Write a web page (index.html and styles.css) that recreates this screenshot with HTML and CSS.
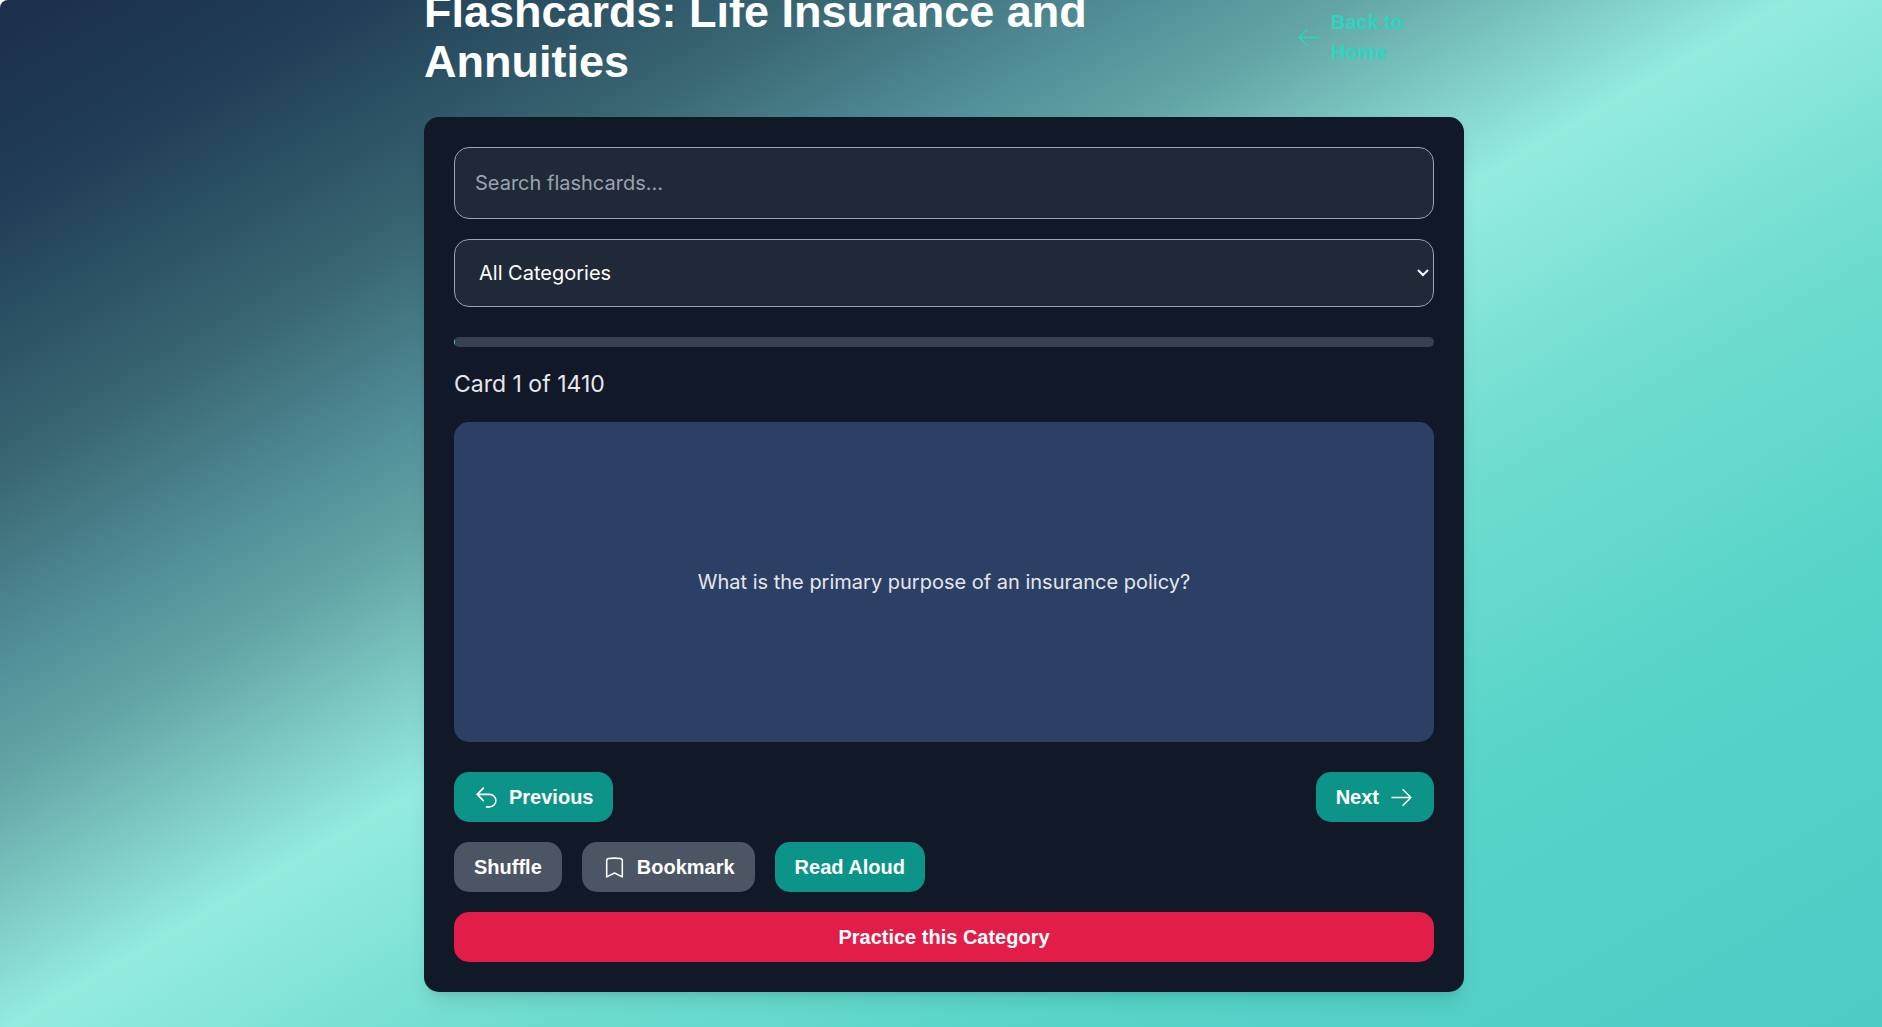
FILE: index.html
```html
<!DOCTYPE html>
<html lang="en">
<head>
<meta charset="utf-8">
<meta name="viewport" content="width=device-width, initial-scale=1">
<title>Flashcards: Life Insurance and Annuities</title>
<link rel="stylesheet" href="styles.css">
</head>
<body>
<div class="shell">
<div class="page">
  <main class="container">
    <header class="header">
      <h1 class="title">Flashcards: Life Insurance and Annuities</h1>
      <a class="back" href="#">
        <svg class="icon" viewBox="0 0 24 24" aria-hidden="true"><path d="M10.5 19.5 3 12m0 0 7.500-7.500M3 12h18"/></svg>
        <span>Back to Home</span>
      </a>
    </header>
    <section class="panel">
      <div class="filters">
        <input class="field search" type="text" placeholder="Search flashcards..." aria-label="Search flashcards">
        <div class="select">
          <select class="field category" aria-label="Category">
            <option>All Categories</option>
          </select>
          <svg class="chevron" viewBox="0 0 12 8" aria-hidden="true"><path d="M1.500 1.500 6 6l4.500-4.500"/></svg>
        </div>
      </div>
      <div class="progress"><div class="progress-bar" style="width: 0.07%"></div></div>
      <p class="count">Card 1 of 1410</p>
      <div class="flashcard"><p class="question">What is the primary purpose of an insurance policy?</p></div>
      <div class="actions">
        <div class="row spread">
          <button class="btn teal" type="button">
            <svg class="icon" viewBox="0 0 24 24" aria-hidden="true"><path d="M9 15 3 9m0 0 6-6M3 9h12a6 6 0 0 1 0 12h-3"/></svg>
            Previous
          </button>
          <button class="btn teal" type="button">
            Next
            <svg class="icon" viewBox="0 0 24 24" aria-hidden="true"><path d="M13.500 4.500 21 12m0 0-7.500 7.500M21 12H3"/></svg>
          </button>
        </div>
        <div class="row">
          <button class="btn gray" type="button">Shuffle</button>
          <button class="btn gray" type="button">
            <svg class="icon" viewBox="0 0 24 24" aria-hidden="true"><path d="M17.593 3.322c1.100.128 1.907 1.077 1.907 2.185V21L12 17.250 4.500 21V5.507c0-1.108.806-2.057 1.907-2.185a48.507 48.507 0 0 1 11.186 0Z"/></svg>
            Bookmark
          </button>
          <button class="btn teal" type="button">Read Aloud</button>
        </div>
        <button class="btn rose" type="button">Practice this Category</button>
      </div>
    </section>
  </main>
</div>
</div>
</body>
</html>
```
FILE: styles.css
```css
*, *::before, *::after {
  box-sizing: border-box;
}

body {
  margin: 0;
  background: #fff;
}

h1, p {
  margin: 0;
}

.shell {
  height: 100vh;
  overflow: auto;
  scrollbar-width: none;
  border-top-left-radius: 8px;
}

.page {
  margin-top: -53px;
  padding: 40px 40px 40px 46px;
  font-family: Inter, sans-serif;
  font-size: 20px;
  line-height: 30px;
  color: #fff;
  background: linear-gradient(to bottom right, #1a2a48, #213e56 12%, #386672 24%, #538f99 33%, #62a3a5 38%, #94ebde 50%, #72ddd2 62%, #57d4c8 78%, #4dccc4);
}

.container {
  max-width: 1040px;
  margin: 0 auto;
}

.header {
  display: flex;
  justify-content: space-between;
  align-items: center;
  margin-bottom: 30px;
}

.title {
  max-width: 780px;
  font: bold 45px/50px "Liberation Sans", Arial, sans-serif;
}

.back {
  display: flex;
  align-items: center;
  gap: 10px;
  width: 168px;
  padding-right: 40px;
  font: bold 20px/30px "Liberation Sans", Arial, sans-serif;
  color: #2dd4bf;
  text-decoration: none;
}

.icon {
  flex: none;
  width: 25px;
  height: 25px;
  fill: none;
  stroke: currentColor;
  stroke-width: 1.5;
  stroke-linecap: round;
  stroke-linejoin: round;
}

.panel {
  padding: 30px;
  border-radius: 15px;
  background: #111827;
  box-shadow: 0 12px 18px -4px rgb(0 0 0 / 10%), 0 5px 8px -5px rgb(0 0 0 / 10%);
}

.filters {
  display: flex;
  flex-direction: column;
  gap: 20px;
  margin-bottom: 30px;
}

.field {
  width: 100%;
  border: 1px solid #9ca3af;
  border-radius: 15px;
  background: #1f2937;
  color: #fff;
  font: 20px/30px Inter, sans-serif;
}

.search {
  height: 72px;
  padding: 20px;
}

.search::placeholder {
  color: #9ca3af;
}

.select {
  display: grid;
  align-items: center;
}

.category {
  grid-area: 1 / 1;
  height: 68px;
  padding: 0 24px;
  appearance: none;
}

.chevron {
  grid-area: 1 / 1;
  justify-self: end;
  width: 12px;
  height: 8px;
  margin-right: 5px;
  fill: none;
  stroke: #fff;
  stroke-width: 2;
  stroke-linecap: round;
  pointer-events: none;
}

.progress {
  height: 10px;
  margin-bottom: 20px;
  border-radius: 5px;
  background: #374151;
  overflow: hidden;
}

.progress-bar {
  height: 100%;
  background: #2dd4bf;
}

.count {
  margin-bottom: 20px;
  font-size: 23px;
  line-height: 35px;
  color: #e5e7eb;
}

.flashcard {
  display: grid;
  place-items: center;
  min-height: 320px;
  margin-bottom: 30px;
  padding: 30px;
  border-radius: 15px;
  background: #2c4066;
}

.question {
  color: #e5e7eb;
  text-align: center;
}

.actions {
  display: flex;
  flex-direction: column;
  gap: 20px;
}

.row {
  display: flex;
  gap: 20px;
}

.spread {
  justify-content: space-between;
}

.btn {
  display: flex;
  align-items: center;
  justify-content: center;
  gap: 10px;
  height: 50px;
  padding: 0 20px;
  border: 0;
  border-radius: 15px;
  color: #fff;
  font: bold 20px/30px "Liberation Sans", Arial, sans-serif;
  cursor: pointer;
}

.teal {
  background: #0d9488;
}

.gray {
  background: #4b5563;
}

.rose {
  background: #e11d48;
}
```
